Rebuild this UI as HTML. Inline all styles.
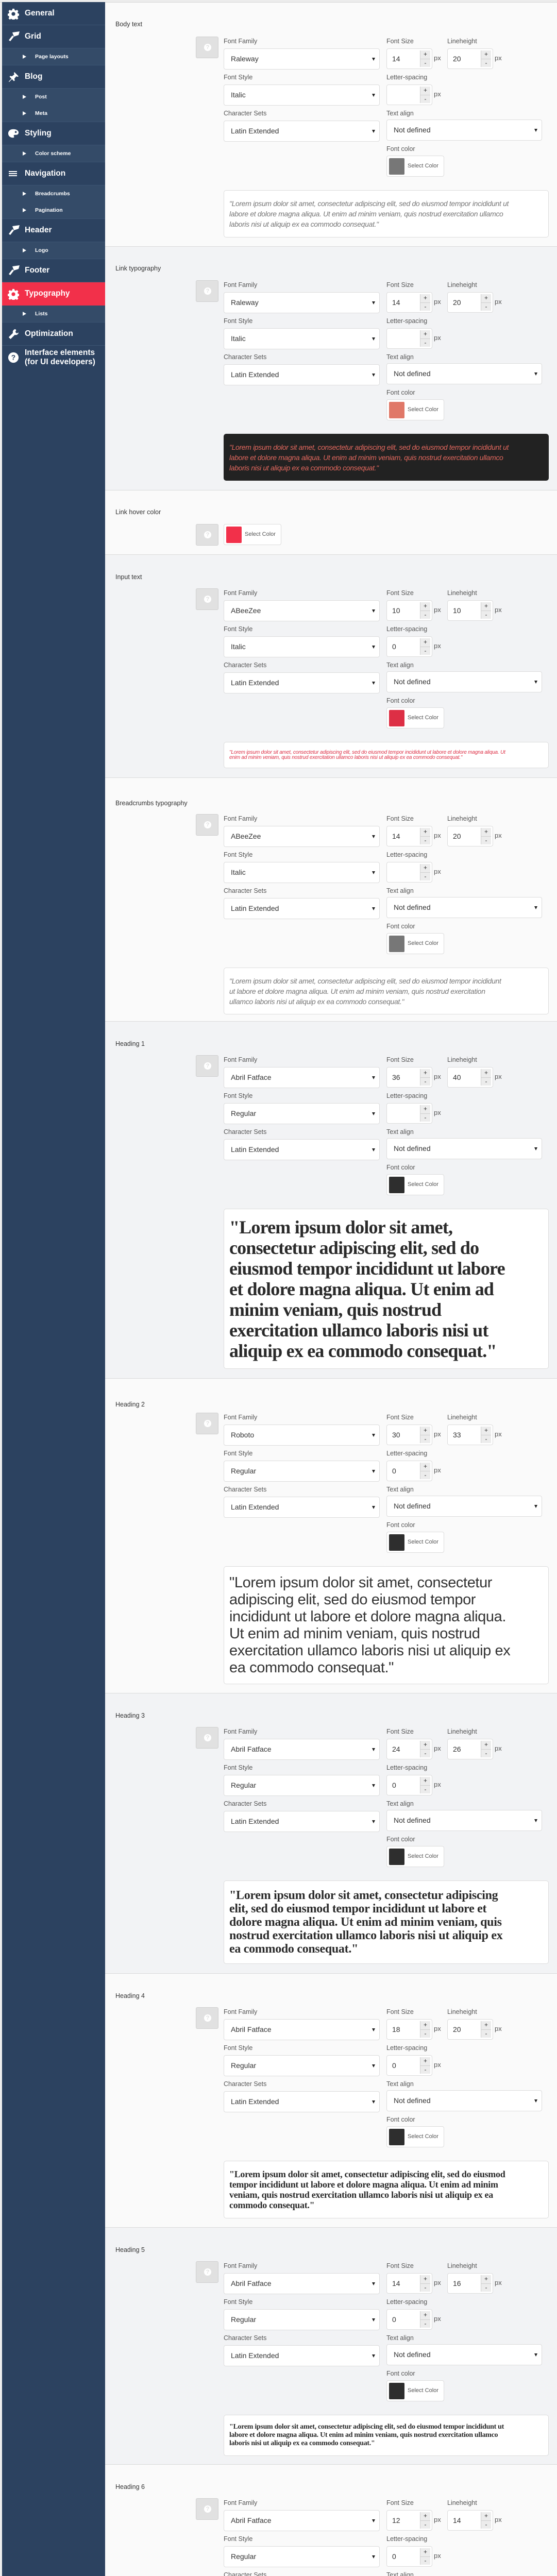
<!DOCTYPE html>
<html><head><meta charset="utf-8">
<style>
*{margin:0;padding:0;box-sizing:border-box}
html,body{width:1081px;height:5229px;overflow:hidden}
body{background:#eeeeee;font-family:"Liberation Sans",sans-serif;position:relative}
#top{position:absolute;left:0;top:0;width:1081px;height:5px;background:#ececec;border-bottom:1px solid #d8d8d8}
#side{position:absolute;left:4px;top:4px;width:200px;height:5225px;background:#2c4260}
.mi{position:relative;height:45px;border-bottom:1px solid #3c5472;color:#fff;font-weight:bold;font-size:15.5px;line-height:44px;padding-left:44px}
.mi svg{position:absolute;left:11px;top:12px}
.si{height:32px;background:#344b68;color:#fff;font-weight:bold;font-size:10.5px;line-height:32px;padding-left:64px;position:relative}
.si:before{content:"";position:absolute;left:40px;top:12px;border-left:7px solid #fff;border-top:4px solid transparent;border-bottom:4px solid transparent}
.grp{padding:0;border-bottom:1px solid #3c5472}
.act{background:#f2304a;border-bottom:none}
.act:after{content:"";position:absolute;right:-12px;top:0;border-left:12px solid #f2304a;border-top:22px solid transparent;border-bottom:23px solid transparent}
#main{position:absolute;left:204px;top:5px;width:877px;height:5224px;overflow:hidden}
.sec{position:absolute;left:0;width:877px;border-bottom:1px solid #dadada;overflow:hidden}
.w{background:#fafafa}.g{background:#f2f3f5}
.lbl{position:absolute;left:20px;font-size:12.5px;color:#333;font-weight:500}
.f{position:absolute;left:176px;width:700px;height:400px}
.hb{position:absolute;left:0;top:0;width:44px;height:42px;background:#e1e1e1;border:1px solid #cfcfcf;border-radius:3px}
.hb i{position:absolute;left:15px;top:13px;width:14px;height:14px;border-radius:50%;background:#fff;color:#e1e1e1;font-style:normal;font-weight:bold;font-size:11px;line-height:14px;text-align:center}
.l{position:absolute;font-size:12.5px;color:#555;white-space:nowrap}
.s{position:absolute;background:#fff;border:1px solid #dcdcdc;border-radius:4px;height:41px;font-size:14px;color:#333;padding-left:13px;line-height:39px;width:303px}
.s:after{content:"";position:absolute;right:8px;top:17px;border-top:6px solid #222;border-left:3px solid transparent;border-right:3px solid transparent}
.c1{left:54px}.c2{left:370px}.c3{left:488px}
.t1{top:2px}.t2{top:72px}.t3{top:142px}.t4{top:211px}
.u1{top:23px}.u2{top:93px}.u3{top:163px}.u4{top:161px}
.n{position:absolute;width:89px;height:40px;background:#fff;border:1px solid #dcdcdc;border-radius:4px;font-size:14px;color:#333;padding-left:10px;line-height:38px}
.sp{position:absolute;right:3px;top:3px;width:20px;height:32px;background:#ececec;border-left:1px solid #d0d0d0}
.sp b{display:block;height:16px;line-height:15px;font-weight:normal;font-size:12px;text-align:center;color:#333}
.sp b+b{border-top:1px solid #d0d0d0}
.px{position:absolute;font-size:13px;color:#555;line-height:38px}
.ta{width:302px;left:370px}
.cb{position:absolute;left:370px;top:231px;width:112px;height:41px;background:#fff;border:1px solid #dcdcdc;border-radius:4px;font-size:11px;color:#555;line-height:39px;padding-left:40px}
.cb i{position:absolute;left:4px;top:4px;width:30px;height:32px;border-radius:2px}
.smp{position:absolute;left:54px;top:298px;width:631px;background:#fff;border:1px solid #dcdcdc;border-radius:5px;padding:15px 10px;white-space:nowrap;overflow:hidden;color:#333}
.it{font-style:italic;font-size:14px;line-height:20px;color:#777;letter-spacing:-0.35px}
.ab{font-family:"Liberation Serif",serif;font-weight:bold;color:#2a2a2a}
</style></head><body>
<div id="top"></div>
<div id="side">
<div class="mi"><svg width="22" height="22" viewBox="0 0 24 24"><path fill="#fff" d="M10 1h4l.6 3 2.4 1 2.6-1.7 2.8 2.8-1.7 2.6 1 2.4 3 .6v4l-3 .6-1 2.4 1.7 2.6-2.8 2.8-2.6-1.7-2.4 1-.6 3h-4l-.6-3-2.4-1-2.6 1.7-2.8-2.8 1.7-2.6-1-2.4-3-.6v-4l3-.6 1-2.4-1.7-2.6 2.8-2.8 2.6 1.7 2.4-1zM12 8a4 4 0 100 8 4 4 0 000-8z"/></svg>General</div>
<div class="mi"><svg width="24" height="20" viewBox="0 0 24 20"><path fill="#fff" d="M9 2l14-2-2 7-9 3zM2 17l7-9 3 2-7 9z"/></svg>Grid</div>
<div class="grp"><div class="si">Page layouts</div></div>
<div class="mi"><svg width="22" height="22" viewBox="0 0 24 24"><path fill="#fff" d="M14 1l9 9-2 1-3-1-4 5 1 4-2 1-4-4-6 6-1-1 6-6-4-4 1-2 4 1 5-4-1-3z"/></svg>Blog</div>
<div class="grp"><div class="si">Post</div><div class="si">Meta</div></div>
<div class="mi"><svg width="22" height="20" viewBox="0 0 24 20"><path fill="#fff" d="M12 1C5 1 1 5 1 10s4 9 10 9c3 0 3-2 2-3s0-3 2-3h3c3 0 5-2 5-5C23 4 18 1 12 1zM17 5a2 2 0 110 4 2 2 0 010-4z"/></svg>Styling</div>
<div class="grp"><div class="si">Color scheme</div></div>
<div class="mi"><svg width="20" height="20" viewBox="0 0 20 20"><path fill="#fff" d="M2 5h16v2H2zM2 9h16v2H2zM2 13h16v2H2z"/></svg>Navigation</div>
<div class="grp"><div class="si">Breadcrumbs</div><div class="si">Pagination</div></div>
<div class="mi"><svg width="24" height="20" viewBox="0 0 24 20"><path fill="#fff" d="M9 2l14-2-2 7-9 3zM2 17l7-9 3 2-7 9z"/></svg>Header</div>
<div class="grp"><div class="si">Logo</div></div>
<div class="mi"><svg width="24" height="20" viewBox="0 0 24 20"><path fill="#fff" d="M9 2l14-2-2 7-9 3zM2 17l7-9 3 2-7 9z"/></svg>Footer</div>
<div class="mi act"><svg width="22" height="22" viewBox="0 0 24 24"><path fill="#fff" d="M10 1h4l.6 3 2.4 1 2.6-1.7 2.8 2.8-1.7 2.6 1 2.4 3 .6v4l-3 .6-1 2.4 1.7 2.6-2.8 2.8-2.6-1.7-2.4 1-.6 3h-4l-.6-3-2.4-1-2.6 1.7-2.8-2.8 1.7-2.6-1-2.4-3-.6v-4l3-.6 1-2.4-1.7-2.6 2.8-2.8 2.6 1.7 2.4-1zM12 8a4 4 0 100 8 4 4 0 000-8z"/></svg>Typography</div>
<div class="grp"><div class="si">Lists</div></div>
<div class="mi"><svg width="22" height="22" viewBox="0 0 24 24"><path fill="#fff" d="M16 1a6 6 0 00-5 8L2 18l4 4 9-9a6 6 0 008-5l-4 2-3-3 2-4z"/></svg>Optimization</div>
<div class="mi" style="height:66px;line-height:18px;padding-top:5px;border:none"><svg width="22" height="22" viewBox="0 0 24 24"><circle cx="12" cy="12" r="11" fill="#fff"/><text x="12" y="17" text-anchor="middle" font-size="15" font-weight="bold" fill="#2c4260" font-family="Liberation Sans">?</text></svg>Interface elements<br>(for UI developers)</div>
</div>

<div id="main">

<div class="sec w" style="top:0;height:474px">
<div class="lbl" style="top:35px">Body text</div>
<div class="f" style="top:66px">
<div class="hb"><i>?</i></div>
<div class="l c1 t1">Font Family</div><div class="s c1 u1">Raleway</div>
<div class="l c1 t2">Font Style</div><div class="s c1 u2">Italic</div>
<div class="l c1 t3">Character Sets</div><div class="s c1 u3">Latin Extended</div>
<div class="l c2 t1">Font Size</div><div class="n c2 u1">14<span class="sp"><b>+</b><b>-</b></span></div><div class="px" style="left:462px;top:23px">px</div>
<div class="l c3 t1">Lineheight</div><div class="n c3 u1">20<span class="sp"><b>+</b><b>-</b></span></div><div class="px" style="left:580px;top:23px">px</div>
<div class="l c2 t2">Letter-spacing</div><div class="n c2 u2"><span class="sp"><b>+</b><b>-</b></span></div><div class="px" style="left:462px;top:93px">px</div>
<div class="l c2 t3">Text align</div><div class="s ta u4">Not defined</div>
<div class="l c2 t4">Font color</div><div class="cb"><i style="background:#777"></i>Select Color</div>
<div class="smp it" style="height:92px">"Lorem ipsum dolor sit amet, consectetur adipiscing elit, sed do eiusmod tempor incididunt ut<br>labore et dolore magna aliqua. Ut enim ad minim veniam, quis nostrud exercitation ullamco<br>laboris nisi ut aliquip ex ea commodo consequat."</div>
</div></div>

<div class="sec g" style="top:474px;height:473px">
<div class="lbl" style="top:35px">Link typography</div>
<div class="f" style="top:65px">
<div class="hb"><i>?</i></div>
<div class="l c1 t1">Font Family</div><div class="s c1 u1">Raleway</div>
<div class="l c1 t2">Font Style</div><div class="s c1 u2">Italic</div>
<div class="l c1 t3">Character Sets</div><div class="s c1 u3">Latin Extended</div>
<div class="l c2 t1">Font Size</div><div class="n c2 u1">14<span class="sp"><b>+</b><b>-</b></span></div><div class="px" style="left:462px;top:23px">px</div>
<div class="l c3 t1">Lineheight</div><div class="n c3 u1">20<span class="sp"><b>+</b><b>-</b></span></div><div class="px" style="left:580px;top:23px">px</div>
<div class="l c2 t2">Letter-spacing</div><div class="n c2 u2"><span class="sp"><b>+</b><b>-</b></span></div><div class="px" style="left:462px;top:93px">px</div>
<div class="l c2 t3">Text align</div><div class="s ta u4">Not defined</div>
<div class="l c2 t4">Font color</div><div class="cb"><i style="background:#e07868"></i>Select Color</div>
<div class="smp it" style="height:91px;background:#222;border-color:#222;color:#e0675d">"Lorem ipsum dolor sit amet, consectetur adipiscing elit, sed do eiusmod tempor incididunt ut<br>labore et dolore magna aliqua. Ut enim ad minim veniam, quis nostrud exercitation ullamco<br>laboris nisi ut aliquip ex ea commodo consequat."</div>
</div></div>

<div class="sec w" style="top:947px;height:125px">
<div class="lbl" style="top:35px">Link hover color</div>
<div class="f" style="top:65px;height:50px">
<div class="hb"><i>?</i></div>
<div class="cb" style="left:54px;top:0"><i style="background:#f2304a"></i>Select Color</div>
</div></div>

<div class="sec g" style="top:1072px;height:433px">
<div class="lbl" style="top:36px">Input text</div>
<div class="f" style="top:65px">
<div class="hb"><i>?</i></div>
<div class="l c1 t1">Font Family</div><div class="s c1 u1">ABeeZee</div>
<div class="l c1 t2">Font Style</div><div class="s c1 u2">Italic</div>
<div class="l c1 t3">Character Sets</div><div class="s c1 u3">Latin Extended</div>
<div class="l c2 t1">Font Size</div><div class="n c2 u1">10<span class="sp"><b>+</b><b>-</b></span></div><div class="px" style="left:462px;top:23px">px</div>
<div class="l c3 t1">Lineheight</div><div class="n c3 u1">10<span class="sp"><b>+</b><b>-</b></span></div><div class="px" style="left:580px;top:23px">px</div>
<div class="l c2 t2">Letter-spacing</div><div class="n c2 u2">0<span class="sp"><b>+</b><b>-</b></span></div><div class="px" style="left:462px;top:93px">px</div>
<div class="l c2 t3">Text align</div><div class="s ta u4">Not defined</div>
<div class="l c2 t4">Font color</div><div class="cb"><i style="background:#dd2f45"></i>Select Color</div>
<div class="smp" style="height:51px;font-style:italic;font-size:10px;line-height:10px;color:#dd2f45;letter-spacing:-0.2px">"Lorem ipsum dolor sit amet, consectetur adipiscing elit, sed do eiusmod tempor incididunt ut labore et dolore magna aliqua. Ut<br>enim ad minim veniam, quis nostrud exercitation ullamco laboris nisi ut aliquip ex ea commodo consequat."</div>
</div></div>

<div class="sec w" style="top:1505px;height:473px">
<div class="lbl" style="top:42px">Breadcrumbs typography</div>
<div class="f" style="top:70px">
<div class="hb"><i>?</i></div>
<div class="l c1 t1">Font Family</div><div class="s c1 u1">ABeeZee</div>
<div class="l c1 t2">Font Style</div><div class="s c1 u2">Italic</div>
<div class="l c1 t3">Character Sets</div><div class="s c1 u3">Latin Extended</div>
<div class="l c2 t1">Font Size</div><div class="n c2 u1">14<span class="sp"><b>+</b><b>-</b></span></div><div class="px" style="left:462px;top:23px">px</div>
<div class="l c3 t1">Lineheight</div><div class="n c3 u1">20<span class="sp"><b>+</b><b>-</b></span></div><div class="px" style="left:580px;top:23px">px</div>
<div class="l c2 t2">Letter-spacing</div><div class="n c2 u2"><span class="sp"><b>+</b><b>-</b></span></div><div class="px" style="left:462px;top:93px">px</div>
<div class="l c2 t3">Text align</div><div class="s ta u4">Not defined</div>
<div class="l c2 t4">Font color</div><div class="cb"><i style="background:#777"></i>Select Color</div>
<div class="smp it" style="height:91px">"Lorem ipsum dolor sit amet, consectetur adipiscing elit, sed do eiusmod tempor incididunt<br>ut labore et dolore magna aliqua. Ut enim ad minim veniam, quis nostrud exercitation<br>ullamco laboris nisi ut aliquip ex ea commodo consequat."</div>
</div></div>

<div class="sec g" style="top:1978px;height:693px">
<div class="lbl" style="top:36px">Heading 1</div>
<div class="f" style="top:65px;height:620px">
<div class="hb"><i>?</i></div>
<div class="l c1 t1">Font Family</div><div class="s c1 u1">Abril Fatface</div>
<div class="l c1 t2">Font Style</div><div class="s c1 u2">Regular</div>
<div class="l c1 t3">Character Sets</div><div class="s c1 u3">Latin Extended</div>
<div class="l c2 t1">Font Size</div><div class="n c2 u1">36<span class="sp"><b>+</b><b>-</b></span></div><div class="px" style="left:462px;top:23px">px</div>
<div class="l c3 t1">Lineheight</div><div class="n c3 u1">40<span class="sp"><b>+</b><b>-</b></span></div><div class="px" style="left:580px;top:23px">px</div>
<div class="l c2 t2">Letter-spacing</div><div class="n c2 u2"><span class="sp"><b>+</b><b>-</b></span></div><div class="px" style="left:462px;top:93px">px</div>
<div class="l c2 t3">Text align</div><div class="s ta u4">Not defined</div>
<div class="l c2 t4">Font color</div><div class="cb"><i style="background:#2e2e2e"></i>Select Color</div>
<div class="smp ab" style="height:311px;font-size:36px;line-height:40px;letter-spacing:-0.8px">"Lorem ipsum dolor sit amet,<br>consectetur adipiscing elit, sed do<br>eiusmod tempor incididunt ut labore<br>et dolore magna aliqua. Ut enim ad<br>minim veniam, quis nostrud<br>exercitation ullamco laboris nisi ut<br>aliquip ex ea commodo consequat."</div>
</div></div>

<div class="sec w" style="top:2671px;height:611px">
<div class="lbl" style="top:43px">Heading 2</div>
<div class="f" style="top:66px;height:540px">
<div class="hb"><i>?</i></div>
<div class="l c1 t1">Font Family</div><div class="s c1 u1">Roboto</div>
<div class="l c1 t2">Font Style</div><div class="s c1 u2">Regular</div>
<div class="l c1 t3">Character Sets</div><div class="s c1 u3">Latin Extended</div>
<div class="l c2 t1">Font Size</div><div class="n c2 u1">30<span class="sp"><b>+</b><b>-</b></span></div><div class="px" style="left:462px;top:23px">px</div>
<div class="l c3 t1">Lineheight</div><div class="n c3 u1">33<span class="sp"><b>+</b><b>-</b></span></div><div class="px" style="left:580px;top:23px">px</div>
<div class="l c2 t2">Letter-spacing</div><div class="n c2 u2">0<span class="sp"><b>+</b><b>-</b></span></div><div class="px" style="left:462px;top:93px">px</div>
<div class="l c2 t3">Text align</div><div class="s ta u4">Not defined</div>
<div class="l c2 t4">Font color</div><div class="cb"><i style="background:#2e2e2e"></i>Select Color</div>
<div class="smp" style="height:229px;font-size:29px;line-height:33px;color:#333;letter-spacing:-0.4px">"Lorem ipsum dolor sit amet, consectetur<br>adipiscing elit, sed do eiusmod tempor<br>incididunt ut labore et dolore magna aliqua.<br>Ut enim ad minim veniam, quis nostrud<br>exercitation ullamco laboris nisi ut aliquip ex<br>ea commodo consequat."</div>
</div></div>

<div class="sec g" style="top:3282px;height:544px">
<div class="lbl" style="top:36px">Heading 3</div>
<div class="f" style="top:65px;height:470px">
<div class="hb"><i>?</i></div>
<div class="l c1 t1">Font Family</div><div class="s c1 u1">Abril Fatface</div>
<div class="l c1 t2">Font Style</div><div class="s c1 u2">Regular</div>
<div class="l c1 t3">Character Sets</div><div class="s c1 u3">Latin Extended</div>
<div class="l c2 t1">Font Size</div><div class="n c2 u1">24<span class="sp"><b>+</b><b>-</b></span></div><div class="px" style="left:462px;top:23px">px</div>
<div class="l c3 t1">Lineheight</div><div class="n c3 u1">26<span class="sp"><b>+</b><b>-</b></span></div><div class="px" style="left:580px;top:23px">px</div>
<div class="l c2 t2">Letter-spacing</div><div class="n c2 u2">0<span class="sp"><b>+</b><b>-</b></span></div><div class="px" style="left:462px;top:93px">px</div>
<div class="l c2 t3">Text align</div><div class="s ta u4">Not defined</div>
<div class="l c2 t4">Font color</div><div class="cb"><i style="background:#2e2e2e"></i>Select Color</div>
<div class="smp ab" style="height:162px;font-size:24px;line-height:26px;letter-spacing:-0.3px">"Lorem ipsum dolor sit amet, consectetur adipiscing<br>elit, sed do eiusmod tempor incididunt ut labore et<br>dolore magna aliqua. Ut enim ad minim veniam, quis<br>nostrud exercitation ullamco laboris nisi ut aliquip ex<br>ea commodo consequat."</div>
</div></div>

<div class="sec w" style="top:3826px;height:493px">
<div class="lbl" style="top:36px">Heading 4</div>
<div class="f" style="top:65px">
<div class="hb"><i>?</i></div>
<div class="l c1 t1">Font Family</div><div class="s c1 u1">Abril Fatface</div>
<div class="l c1 t2">Font Style</div><div class="s c1 u2">Regular</div>
<div class="l c1 t3">Character Sets</div><div class="s c1 u3">Latin Extended</div>
<div class="l c2 t1">Font Size</div><div class="n c2 u1">18<span class="sp"><b>+</b><b>-</b></span></div><div class="px" style="left:462px;top:23px">px</div>
<div class="l c3 t1">Lineheight</div><div class="n c3 u1">20<span class="sp"><b>+</b><b>-</b></span></div><div class="px" style="left:580px;top:23px">px</div>
<div class="l c2 t2">Letter-spacing</div><div class="n c2 u2">0<span class="sp"><b>+</b><b>-</b></span></div><div class="px" style="left:462px;top:93px">px</div>
<div class="l c2 t3">Text align</div><div class="s ta u4">Not defined</div>
<div class="l c2 t4">Font color</div><div class="cb"><i style="background:#2e2e2e"></i>Select Color</div>
<div class="smp ab" style="height:112px;font-size:18px;line-height:20px;letter-spacing:-0.3px">"Lorem ipsum dolor sit amet, consectetur adipiscing elit, sed do eiusmod<br>tempor incididunt ut labore et dolore magna aliqua. Ut enim ad minim<br>veniam, quis nostrud exercitation ullamco laboris nisi ut aliquip ex ea<br>commodo consequat."</div>
</div></div>

<div class="sec g" style="top:4319px;height:460px">
<div class="lbl" style="top:36px">Heading 5</div>
<div class="f" style="top:65px">
<div class="hb"><i>?</i></div>
<div class="l c1 t1">Font Family</div><div class="s c1 u1">Abril Fatface</div>
<div class="l c1 t2">Font Style</div><div class="s c1 u2">Regular</div>
<div class="l c1 t3">Character Sets</div><div class="s c1 u3">Latin Extended</div>
<div class="l c2 t1">Font Size</div><div class="n c2 u1">14<span class="sp"><b>+</b><b>-</b></span></div><div class="px" style="left:462px;top:23px">px</div>
<div class="l c3 t1">Lineheight</div><div class="n c3 u1">16<span class="sp"><b>+</b><b>-</b></span></div><div class="px" style="left:580px;top:23px">px</div>
<div class="l c2 t2">Letter-spacing</div><div class="n c2 u2">0<span class="sp"><b>+</b><b>-</b></span></div><div class="px" style="left:462px;top:93px">px</div>
<div class="l c2 t3">Text align</div><div class="s ta u4">Not defined</div>
<div class="l c2 t4">Font color</div><div class="cb"><i style="background:#2e2e2e"></i>Select Color</div>
<div class="smp ab" style="height:80px;font-size:14px;line-height:16px;letter-spacing:-0.3px">"Lorem ipsum dolor sit amet, consectetur adipiscing elit, sed do eiusmod tempor incididunt ut<br>labore et dolore magna aliqua. Ut enim ad minim veniam, quis nostrud exercitation ullamco<br>laboris nisi ut aliquip ex ea commodo consequat."</div>
</div></div>

<div class="sec w" style="top:4779px;height:445px;border-bottom:none">
<div class="lbl" style="top:36px">Heading 6</div>
<div class="f" style="top:65px;height:378px">
<div class="hb"><i>?</i></div>
<div class="l c1 t1">Font Family</div><div class="s c1 u1">Abril Fatface</div>
<div class="l c1 t2">Font Style</div><div class="s c1 u2">Regular</div>
<div class="l c1 t3">Character Sets</div><div class="s c1 u3">Latin Extended</div>
<div class="l c2 t1">Font Size</div><div class="n c2 u1">12<span class="sp"><b>+</b><b>-</b></span></div><div class="px" style="left:462px;top:23px">px</div>
<div class="l c3 t1">Lineheight</div><div class="n c3 u1">14<span class="sp"><b>+</b><b>-</b></span></div><div class="px" style="left:580px;top:23px">px</div>
<div class="l c2 t2">Letter-spacing</div><div class="n c2 u2">0<span class="sp"><b>+</b><b>-</b></span></div><div class="px" style="left:462px;top:93px">px</div>
<div class="l c2 t3">Text align</div><div class="s ta u4">Not defined</div>
<div class="l c2 t4">Font color</div><div class="cb"><i style="background:#2e2e2e"></i>Select Color</div>
<div class="smp ab" style="height:74px;font-size:12px;line-height:14px;letter-spacing:-0.3px">"Lorem ipsum dolor sit amet, consectetur adipiscing elit, sed do eiusmod tempor incididunt ut labore et dolore<br>magna aliqua. Ut enim ad minim veniam, quis nostrud exercitation ullamco laboris nisi ut aliquip ex ea<br>commodo consequat."</div>
</div></div>

</div>
</body></html>
